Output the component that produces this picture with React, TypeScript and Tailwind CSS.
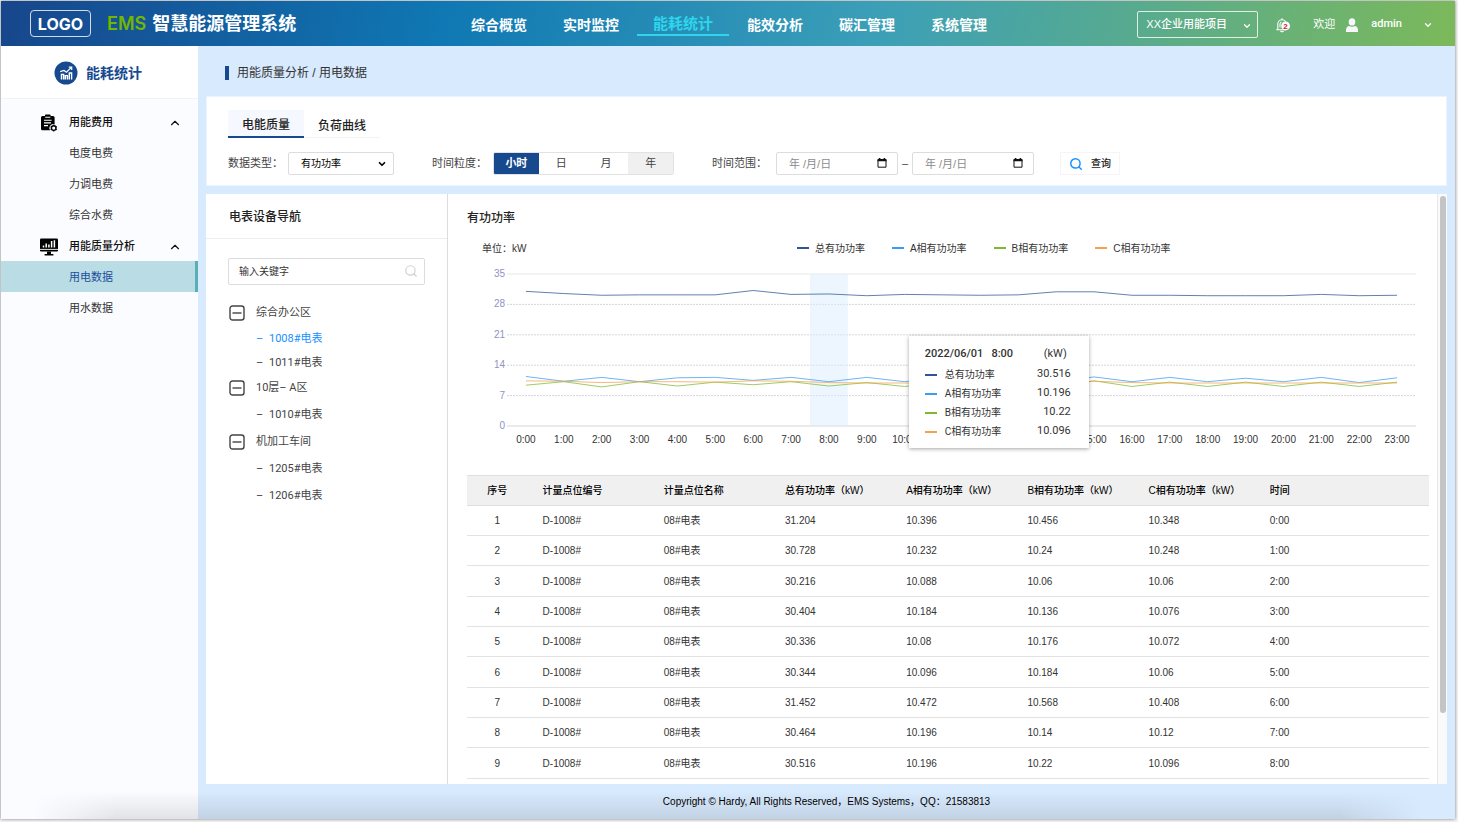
import { useState } from "react";
import { ChevronDown, ChevronUp, Search } from "lucide-react";
import clsx from "clsx";

const navItems = ["综合概览", "实时监控", "能耗统计", "能效分析", "碳汇管理", "系统管理"];

const periods = ["小时", "日", "月", "年"];

const sideMenu = [
    { title: "用能费用", icon: <BillIcon />, children: ["电度电费", "力调电费", "综合水费"] },
    { title: "用能质量分析", icon: <MonitorIcon />, children: ["用电数据", "用水数据"] },
];

interface MeterGroup {
    name: string;
    meters: string[];
    dense?: boolean;
}

const meterGroups: MeterGroup[] = [
    { name: "综合办公区", meters: ["1008#电表", "1011#电表"], dense: true },
    { name: "10层– A区", meters: ["1010#电表"] },
    { name: "机加工车间", meters: ["1205#电表", "1206#电表"] },
];

const columns = ["序号", "计量点位编号", "计量点位名称", "总有功功率（kW）", "A相有功功率（kW）", "B相有功功率（kW）", "C相有功功率（kW）", "时间"];

const rows = [
    ["31.204", "10.396", "10.456", "10.348", "0:00"],
    ["30.728", "10.232", "10.24", "10.248", "1:00"],
    ["30.216", "10.088", "10.06", "10.06", "2:00"],
    ["30.404", "10.184", "10.136", "10.076", "3:00"],
    ["30.336", "10.08", "10.176", "10.072", "4:00"],
    ["30.344", "10.096", "10.184", "10.06", "5:00"],
    ["31.452", "10.472", "10.568", "10.408", "6:00"],
    ["30.464", "10.196", "10.14", "10.12", "7:00"],
    ["30.516", "10.196", "10.22", "10.096", "8:00"],
];

const series = [
    {
        name: "总有功功率",
        color: "#2f5597",
        current: "30.516",
        values: [31, 30.5, 30.1, 30.2, 30.2, 30.2, 31.2, 30.3, 30.4, 30, 30.3, 30.2, 30.1, 30.2, 30.9, 30.9, 30.1, 30.1, 30, 30, 30, 30.3, 30, 30.1],
    },
    {
        name: "A相有功功率",
        color: "#3b9cf5",
        current: "10.196",
        values: [11.4, 10.3, 11.2, 10.2, 11.1, 11.2, 10.5, 11.2, 10.2, 11.2, 10.2, 11.2, 10.2, 11.2, 10.2, 11.3, 10.2, 11.2, 10.2, 11, 10.2, 11.2, 10, 11.1],
    },
    {
        name: "B相有功功率",
        color: "#7dbb2c",
        current: "10.22",
        values: [9.4, 10.2, 9, 10.2, 9.2, 10.1, 9.5, 10.2, 9.2, 10, 9.1, 10.1, 9.1, 10.1, 9.1, 10.4, 9.1, 10.1, 9.1, 10.1, 9.1, 10.1, 9.1, 10.1],
    },
    {
        name: "C相有功功率",
        color: "#f5a04a",
        current: "10.096",
        values: [10.4, 10.3, 10, 10.2, 10.2, 10.1, 10.4, 10.3, 10, 9.9, 9.9, 9.9, 9.9, 9.9, 9.9, 10.3, 10, 9.9, 9.9, 9.9, 9.9, 9.9, 9.9, 9.9],
    },
];

const yTicks = [35, 28, 21, 14, 7, 0];
const hours = Array.from({ length: 24 }, (_, i) => `${i}:00`);

function BillIcon() {
    return (
        <svg viewBox="0 0 18 18" className="size-[18px]">
            <path d="M2.5 2H5V1.2Q5 .4 5.8.4H9.8Q10.6.4 10.6 1.2V2H13Q14.6 2 14.6 3.6V10.4A3.9 3.9 0 0 0 10 16.3H2.5Q1 16.3 1 14.8V3.5Q1 2 2.5 2Z" fill="#000" />
            <path d="M5.2 3.2H10.4M4 6.2H11.6M4 8.9H11M4 11.6H8" stroke="#fff" strokeWidth="1.1" />
            <circle cx="13.7" cy="14.1" r="2.3" fill="#fff" stroke="#000" strokeWidth="1.4" />
            <path d="M13.7 10.8V12M13.7 16.2V17.4M10.7 12.5l1 .6M15.7 15.2l1 .6M10.7 15.7l1-.6M15.7 13l1-.6" stroke="#000" strokeWidth="1.2" />
        </svg>
    );
}

function MonitorIcon() {
    return (
        <svg viewBox="0 0 18 18" className="size-[18px]">
            <rect x="0" y="0.5" width="18" height="13" rx="1.3" fill="#000" />
            <path d="M0 11.4H18" stroke="#fff" strokeWidth="0.9" />
            <path d="M3.5 9.6V7.4M6.2 9.6V5.6M8.9 9.6V6.6M11.6 9.6V3M14.4 9.6V2.2" stroke="#fff" strokeWidth="1.5" />
            <path d="M7 13.5H11V16H13.4V17.4H4.6V16H7Z" fill="#000" />
        </svg>
    );
}

function StatsBadge() {
    return (
        <svg viewBox="0 0 24 24" className="size-6">
            <circle cx="12" cy="12" r="11.5" fill="#17498f" />
            <g fill="none" stroke="#fff">
                <path d="M7.5 18.6V13.4H9.6V18.6M11.3 18.6V14.6H13.4V18.6M15.3 18.6V12H17.6V18.6" strokeWidth="1.4" />
                <path d="M6.2 10.6L10 9.4L12.4 11.2L17.4 6.4" strokeWidth="1.2" />
                <path d="M14.8 6.2H17.7V9" strokeWidth="1.2" />
            </g>
        </svg>
    );
}

function BellIcon() {
    return (
        <svg viewBox="0 0 16 16" className="size-4">
            <g fill="none" stroke="#fff" strokeWidth="1.1">
                <path d="M1.2 12.8H11M2.8 12.8V7A4.2 4.2 0 0 1 11.2 7M7 2.8V1.2M5.5 14Q7 15.6 8.5 14" />
                <path d="M5 10.6V7.3Q5 5.6 6.4 5.1" />
            </g>
            <circle cx="10.6" cy="8.9" r="4.4" fill="#fff" />
            <text x="10.6" y="11.9" textAnchor="middle" fontSize="8" fontWeight="700" fill="#d9142b">2</text>
        </svg>
    );
}

function UserIcon() {
    return (
        <svg viewBox="0 0 14 14" className="size-3.5" fill="#f5f7fa">
            <ellipse cx="7" cy="3.9" rx="3.3" ry="3.7" />
            <path d="M1 14Q.6 8.8 4 8Q7 9.6 10 8Q13.4 8.8 13 14Q7 14.4 1 14Z" />
        </svg>
    );
}

function CalendarIcon() {
    return (
        <svg viewBox="0 0 10 10" className="size-2.5">
            <path d="M1 1.5H9V9.2H1Z" fill="none" stroke="#111" />
            <path d="M.5 2.4H9.5M2.6 0V2M7.4 0V2" stroke="#111" strokeWidth="1.6" />
        </svg>
    );
}

function Header() {
    return (
        <header className="flex h-[45px] items-center bg-[linear-gradient(100deg,#17468c_0%,#0f77b3_30%,#3b9fb8_60%,#7cb95a_100%)] text-white">
            <div className="flex w-[452px] shrink-0 items-center pl-[29px]">
                <div className="flex h-[27px] w-[61px] items-center justify-center rounded border border-white/80 font-['Inter'] font-bold">LOGO</div>
                <h1 className="ml-4 flex items-center gap-1.5 text-lg font-bold whitespace-nowrap">
                    <span className="font-['Inter'] font-semibold text-[#72b700]">EMS</span>
                    智慧能源管理系统
                </h1>
            </div>
            <nav className="flex">
                {navItems.map((item) => (
                    <a
                        key={item}
                        href="#"
                        className={clsx(
                            "flex h-6 w-[92px] items-center justify-center border-b-2 pt-1 font-bold",
                            item === "能耗统计" ? "border-[#2fd5ec] text-[15px] text-[#2fd5ec]" : "border-transparent text-sm",
                        )}
                    >
                        {item}
                    </a>
                ))}
            </nav>
            <div className="ml-auto flex items-center pt-0.5 pr-[22px] text-[11px]">
                <div className="relative">
                    <select aria-label="项目" className="h-[27px] w-[121px] appearance-none rounded-xs border border-white/80 pl-2 font-medium">
                        <option>XX企业用能项目</option>
                    </select>
                    <ChevronDown className="pointer-events-none absolute top-2.5 right-1.5 size-2.5" strokeWidth={3} />
                </div>
                <button aria-label="通知" className="ml-[17px]">
                    <BellIcon />
                </button>
                <span className="ml-[22px]">欢迎</span>
                <span className="ml-2.5"><UserIcon /></span>
                <button className="ml-3 flex items-center gap-[21px] font-['Roboto'] font-medium">
                    admin
                    <ChevronDown className="size-2.5" strokeWidth={3} />
                </button>
            </div>
        </header>
    );
}

function Sidebar() {
    return (
        <aside className="w-[197px] shrink-0 bg-[#fbfcff] text-[11px] text-[#333]">
            <div className="flex h-[53px] items-center gap-2 border-b border-[#f2f3f5] bg-white pt-0.5 pl-[53px] text-sm font-bold text-[#17498f]">
                <StatsBadge />
                能耗统计
            </div>
            <ul className="pt-[7px]">
                {sideMenu.map((group) => (
                    <li key={group.title}>
                        <button className="flex h-[31px] w-full items-center pt-0.5 pr-4 pl-[39px] font-medium text-[#111]">
                            {group.icon}
                            <span className="ml-[11px]">{group.title}</span>
                            <ChevronUp className="ml-auto size-3.5" strokeWidth={2} />
                        </button>
                        <ul>
                            {group.children.map((child) => (
                                <li key={child}>
                                    <a
                                        href="#"
                                        className={clsx(
                                            "flex h-[31px] items-center pt-0.5 pl-[68px]",
                                            child === "用电数据" && "border-r-3 border-[#5aafb5] bg-[#b9dce5] text-[#1c4f9c]",
                                        )}
                                    >
                                        {child}
                                    </a>
                                </li>
                            ))}
                        </ul>
                    </li>
                ))}
            </ul>
        </aside>
    );
}

function DateField({ label }: { label: string }) {
    return (
        <div className="relative">
            <input aria-label={label} placeholder="年 /月/日" className="h-[23px] w-[122px] rounded-xs border border-[#dcdcdc] pl-3 placeholder:text-[#8c8c8c]" />
            <button aria-label={`选择${label}`} className="absolute top-1.5 right-[11px]">
                <CalendarIcon />
            </button>
        </div>
    );
}

function Filters() {
    const [period, setPeriod] = useState("小时");

    return (
        <section className="border border-[#eaf4ff] bg-white px-[21px] pt-[13px] pb-2.5 text-[11px] text-[#444]">
            <div className="flex text-xs font-medium text-[#222]">
                <button className="h-7 w-[76px] border-b-2 border-[#17498f] bg-[#f5f9ff] pt-1">电能质量</button>
                <button className="h-7 w-[76px] border-b border-[#f3f3f3] pt-1">负荷曲线</button>
            </div>
            <div className="mt-3.5 flex items-center">
                <label htmlFor="dataType" className="w-[60px]">数据类型：</label>
                <div className="relative">
                    <select id="dataType" className="h-[23px] w-[106px] appearance-none rounded-xs border border-[#dcdcdc] pl-3 text-[10px] text-black">
                        <option>有功功率</option>
                    </select>
                    <ChevronDown className="pointer-events-none absolute top-[7px] right-[7px] size-2.5 text-black" strokeWidth={4} />
                </div>
                <span className="ml-[38px] w-[61px]">时间粒度：</span>
                <div className="flex h-[23px] w-[181px] overflow-hidden rounded-xs border border-[#e2e2e2]">
                    {periods.map((item) => (
                        <button
                            key={item}
                            onClick={() => setPeriod(item)}
                            className={clsx(
                                "flex-1",
                                item === period && "bg-[#17498f] font-bold text-white",
                                item !== period && item === "年" && "bg-[#f0f0f0]",
                            )}
                        >
                            {item}
                        </button>
                    ))}
                </div>
                <span className="ml-[38px] w-16">时间范围：</span>
                <DateField label="开始日期" />
                <span className="w-3.5 text-center">–</span>
                <DateField label="结束日期" />
                <button className="ml-[26px] flex h-[23px] w-[60px] items-center justify-center gap-2 border border-[#f5f5f5] text-[10px] font-medium text-[#222]">
                    <Search className="size-3.5 text-[#1890ff]" strokeWidth={2.5} />
                    查询
                </button>
            </div>
        </section>
    );
}

function MeterTree() {
    return (
        <section className="w-[242px] shrink-0 border-r border-[#dcdcdc]">
            <h2 className="flex h-[45px] items-center border-b border-[#ededed] pt-0.5 pl-[23px] text-xs font-medium text-[#222]">电表设备导航</h2>
            <div className="relative mx-[22px] mt-[19px]">
                <input aria-label="输入关键字" placeholder="输入关键字" className="h-[27px] w-full rounded-xs border border-[#dcdcdc] pl-2.5 text-[10px] placeholder:text-[#333]" />
                <Search className="absolute top-1.5 right-[7px] size-3.5 text-[#d0d0d0]" />
            </div>
            <ul className="mt-3.5 pl-[23px] font-['Roboto','Noto_Sans_CJK_SC',sans-serif] text-[11px] text-[#444]">
                {meterGroups.map((group) => (
                    <li key={group.name}>
                        <button className="flex h-[27px] items-center gap-[11px]">
                            <svg viewBox="0 0 16 16" className="size-4" fill="none" stroke="#444" strokeWidth="1.4">
                                <rect x="1" y="1" width="14" height="14" rx="2.5" />
                                <path d="M3.5 8H12.5" />
                            </svg>
                            <span className="pt-0.5">{group.name}</span>
                        </button>
                        <ul>
                            {group.meters.map((meter) => (
                                <li key={meter}>
                                    <a
                                        href="#"
                                        className={clsx(
                                            "flex items-center pt-0.5 pl-[27px]",
                                            group.dense ? "h-6" : "h-[27px]",
                                            meter === "1008#电表" && "text-[#1890ff]",
                                        )}
                                    >
                                        <span className="w-[13px]">–</span>
                                        {meter}
                                    </a>
                                </li>
                            ))}
                        </ul>
                    </li>
                ))}
            </ul>
        </section>
    );
}

function Tooltip() {
    return (
        <div className="absolute top-[62px] left-[44.2%] w-[180px] bg-white pt-2 pr-[18px] pb-[7px] pl-4 font-['Roboto','Noto_Sans_CJK_SC',sans-serif] text-[11px] text-[#333] shadow-[0_1px_4px_rgba(0,0,0,0.35)]">
            <div className="flex h-[21px] items-center gap-2 font-medium">
                <span>2022/06/01</span>
                <span>8:00</span>
                <span className="mr-1 ml-auto font-normal">(kW)</span>
            </div>
            {series.map((item) => (
                <div key={item.name} className="flex h-[19px] items-center">
                    <span className="h-0.5 w-3" style={{ background: item.color }}></span>
                    <span className="ml-2 text-[10px]">{item.name}</span>
                    <span className="ml-auto">{item.current}</span>
                </div>
            ))}
        </div>
    );
}

function PowerChart() {
    return (
        <div className="text-[10px] text-[#333]">
            <div className="flex h-5 items-center pl-[15px]">
                <span>单位：kW</span>
                <div className="flex flex-1 justify-center gap-[27px] pl-3">
                    {series.map((item) => (
                        <span key={item.name} className="flex items-center gap-[6px]">
                            <i className="h-0.5 w-3" style={{ background: item.color }}></i>
                            {item.name}
                        </span>
                    ))}
                </div>
            </div>
            <div className="mt-4 flex pr-[13px]">
                <div className="-my-1.5 flex h-[164px] w-10 flex-col justify-between pr-0.5 text-right leading-3 text-[#8f93c4]">
                    {yTicks.map((tick) => (
                        <span key={tick}>{tick}</span>
                    ))}
                </div>
                <div className="relative flex-1">
                    <svg viewBox="0 0 24 35" preserveAspectRatio="none" className="block h-[152px] w-full overflow-visible">
                        {yTicks.map((tick) => (
                            <line
                                key={tick}
                                x1="0"
                                x2="24"
                                y1={35 - tick}
                                y2={35 - tick}
                                stroke={tick === 35 ? "#e8e8e8" : "#d4d6da"}
                                strokeDasharray={tick === 35 || tick === 0 ? undefined : "2 1"}
                                vectorEffect="non-scaling-stroke"
                            />
                        ))}
                        <rect x="8" y="0" width="1" height="35" fill="#dcedff" fillOpacity="0.5" />
                        {series.map((item) => (
                            <polyline
                                key={item.name}
                                points={item.values.map((v, i) => `${i + 0.5},${35 - v}`).join(" ")}
                                fill="none"
                                stroke={item.color}
                                strokeOpacity="0.75"
                                vectorEffect="non-scaling-stroke"
                            />
                        ))}
                    </svg>
                    <div className="mt-2 grid grid-cols-24 leading-3">
                        {hours.map((hour) => (
                            <span key={hour} className="text-center">{hour}</span>
                        ))}
                    </div>
                    <Tooltip />
                </div>
            </div>
        </div>
    );
}

function DataTable() {
    return (
        <table className="mt-[29px] w-full table-fixed border-collapse text-left text-[10px] text-[#333]">
            <thead>
                <tr className="h-[30px] border-y border-[#dfdfdf] bg-[#f0f0f0] text-black">
                    {columns.map((col, i) => (
                        <th
                            key={col}
                            className={clsx(
                                "font-medium whitespace-nowrap",
                                i === 0 && "w-[6.3%] text-center",
                                i > 0 && "pl-[15px]",
                                i > 0 && i < columns.length - 1 && "w-[12.6%]",
                            )}
                        >
                            {col}
                        </th>
                    ))}
                </tr>
            </thead>
            <tbody>
                {rows.map((row, i) => (
                    <tr key={row[4]} className="h-[30px] border-b border-[#e2e2e2] nth-[3n]:h-[31px]">
                        <td className="text-center">{i + 1}</td>
                        <td className="pl-[15px]">D-1008#</td>
                        <td className="pl-[15px]">08#电表</td>
                        {row.map((cell, j) => (
                            <td key={j} className="pl-[15px]">{cell}</td>
                        ))}
                    </tr>
                ))}
            </tbody>
        </table>
    );
}

export default function App() {
    return (
        <div className="min-h-screen bg-[#f3f3f3] pt-px pr-[3px] pb-[3px] pl-px font-['Liberation_Sans','Noto_Sans_CJK_SC',sans-serif]">
            <div className="relative flex min-h-[calc(100vh-4px)] flex-col bg-[#d8eafe] shadow-[0_0_3px_rgba(0,0,0,0.5)]">
                <Header />
                <div className="flex flex-1">
                    <Sidebar />
                    <main className="flex min-w-0 flex-1 flex-col px-2">
                        <div className="flex h-[50px] items-center gap-2 pt-1 pl-[19px] text-xs text-[#333]">
                            <span className="h-3.5 w-1 bg-[#17498f]"></span>
                            用能质量分析 / 用电数据
                        </div>
                        <Filters />
                        <div className="mt-2 flex flex-1 bg-white">
                            <MeterTree />
                            <section className="min-w-0 flex-1 px-2 pl-[19px]">
                                <h2 className="mb-[11px] pt-[15px] text-xs leading-[18px] font-medium text-[#222]">有功功率</h2>
                                <PowerChart />
                                <DataTable />
                            </section>
                            <div className="flex w-2.5 justify-center border-l border-[#e8e8e8] bg-[#fafafa] pt-0.5">
                                <div className="h-[88%] w-1.5 rounded-full bg-[#c4c4c4]"></div>
                            </div>
                        </div>
                        <footer className="flex h-[35px] items-center justify-center text-[10px] text-black">
                            Copyright © Hardy, All Rights Reserved，EMS Systems，QQ：21583813
                        </footer>
                    </main>
                </div>
                <div className="pointer-events-none absolute inset-x-8 bottom-0 h-7 bg-linear-to-b from-transparent to-black/10 mask-x-from-94% mask-x-to-100%"></div>
            </div>
        </div>
    );
}
